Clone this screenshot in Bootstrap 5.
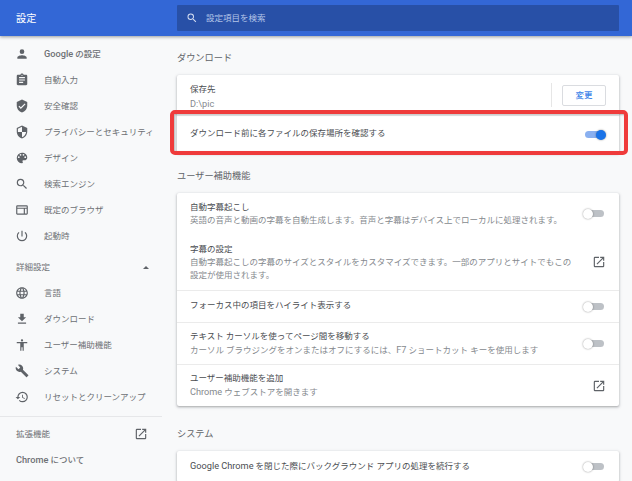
<!DOCTYPE html>
<html lang="ja"><head><meta charset="utf-8"><title>設定</title>
<link rel="stylesheet" href="https://cdn.jsdelivr.net/npm/bootstrap@5.3.0/dist/css/bootstrap.min.css">
<style>
html,body{height:481px;overflow:hidden}
body{background:#f8f9fa;font-family:"Roboto","Noto Sans CJK JP",sans-serif;font-size:8.5px;color:#5f6368;line-height:13px}
.lat{font-size:9.2px}
.hdr{height:36px;background:#3367d6;box-shadow:0 1px 3px rgba(60,64,67,.5);position:relative;z-index:2}
.hdr-title{width:177px;padding-left:16px;color:#fff;font-size:10.2px}
.srch{width:442px;height:26px;background:#2850a7;border-radius:1px;color:#b4c5e8;padding-left:9px;gap:8px}
.side{width:165px;flex:none;height:445px;padding-top:5px}
.nav-r{height:26px;padding-left:15px;color:#6d7074}
.nav-r svg{width:14px;height:14px;fill:#5f6368;flex:none;margin-right:15px}
.nav-t{font-weight:500}
.side-head{height:26px;padding:0 16px;margin-top:5px;color:#6d7074}
.side-rule{border-top:1px solid #e6e7e9;margin:6px 3px 4px 0}
.ext-ic{width:14px;height:14px;fill:#5f6368;margin-right:1px}
.main{width:442px;flex:none;margin-left:12px;padding-top:12px}
.h-sec{font-size:9.2px;color:#5f6368;height:18px;line-height:20px}
.crd{background:#fff;border-radius:2px;box-shadow:0 1px 2px rgba(60,64,67,.3),0 1px 3px 1px rgba(60,64,67,.13);margin-top:9px}
.rw{padding:0 13px;display:flex;align-items:center}
.rw+.rw{border-top:1px solid #ebebeb}
.rw-n{flex:1;min-width:0}
.up1{padding-bottom:2px}
.dn2{padding-top:3px}
.tt{color:#4a4d51}
.ss{color:#85898e}
.ss-low{margin-top:1px}
.tog{width:21px;height:10px;position:relative;flex:none;margin-right:2px}
.tog::before{content:"";position:absolute;left:2px;right:0;top:1.500px;height:7px;border-radius:4px;background:#bdc1c6}
.tog::after{content:"";position:absolute;left:0;top:0;width:10px;height:10px;border-radius:50%;background:#fff;box-shadow:0 0 2px rgba(0,0,0,.45)}
.tog-on{margin-right:0}
.tog-on::before{background:#8ab0f0;left:0;right:2px}
.tog-on::after{left:11px;background:#1a73e8}
.ln{width:14px;height:14px;fill:#5f6368;flex:none}
.chg{width:44px;height:21px;border:1px solid #dadce0;border-radius:2px;color:#4285e8;background:#fff;font-size:8.5px;padding:0;line-height:19px;font-weight:500}
.vr-s{border-left:1px solid #e6e6e6;height:24px;margin-right:10px}
.redbox{position:absolute;left:170px;top:110px;width:458px;height:45px;border:4px solid #ef3b3b;border-radius:5px;z-index:3;box-shadow:inset 1px 1px 2px rgba(60,64,67,.35)}
.r40{height:40px}.r38{height:38px}.r41{height:41px}.r56{height:56px;border:0!important}.r32{height:32px}.r42{height:42px}.r31{height:31px}
.mt13{margin-top:13px}.mt18{margin-top:18px}
</style></head><body>
<div class="hdr d-flex align-items-center">
 <div class="hdr-title">設定</div>
 <div class="srch d-flex align-items-center">
  <svg width="12" height="12" viewBox="0 0 24 24" fill="#d5def2"><path d="M15.500 14h-.79l-.28-.27A6.471 6.471 0 0 0 16 9.500 6.500 6.500 0 1 0 9.500 16c1.610 0 3.090-.59 4.230-1.570l.27.28v.79l5 4.990L20.490 19l-4.990-5zm-6 0C7.010 14 5 11.990 5 9.500S7.010 5 9.500 5 14 7.010 14 9.500 11.990 14 9.500 14z"/></svg>
  <span>設定項目を検索</span>
 </div>
</div>
<div class="d-flex">
 <div class="side">
  <div class="nav-r d-flex align-items-center"><svg viewBox="0 0 24 24"><path d="M12 12a4 4 0 1 0 0-8 4 4 0 0 0 0 8zm0 2c-2.670 0-8 1.340-8 4v2h16v-2c0-2.660-5.330-4-8-4z"/></svg><span class="nav-t"><span class="lat">Google</span> の設定</span></div>
  <div class="nav-r d-flex align-items-center"><svg viewBox="0 0 24 24"><path d="M19 3h-4.180C14.400 1.840 13.300 1 12 1s-2.400.84-2.820 2H5c-1.100 0-2 .9-2 2v14c0 1.100.9 2 2 2h14c1.100 0 2-.9 2-2V5c0-1.100-.9-2-2-2zm-7 0c.55 0 1 .45 1 1s-.45 1-1 1-1-.45-1-1 .45-1 1-1zm2 14H7v-2h7v2zm3-4H7v-2h10v2zm0-4H7V7h10v2z"/></svg><span>自動入力</span></div>
  <div class="nav-r d-flex align-items-center"><svg viewBox="0 0 24 24"><path d="M12 1 3 5v6c0 5.550 3.840 10.740 9 12 5.160-1.260 9-6.450 9-12V5l-9-4zm-2 16-4-4 1.410-1.410L10 14.170l6.590-6.590L18 9l-8 8z"/></svg><span>安全確認</span></div>
  <div class="nav-r d-flex align-items-center"><svg viewBox="0 0 24 24"><path d="M12 1 3 5v6c0 5.550 3.840 10.740 9 12 5.160-1.260 9-6.450 9-12V5l-9-4zm0 10.990h7c-.53 4.120-3.280 7.790-7 8.940V12H5V6.300l7-3.110v8.800z"/></svg><span>プライバシーとセキュリティ</span></div>
  <div class="nav-r d-flex align-items-center"><svg viewBox="0 0 24 24"><path d="M12 3a9 9 0 0 0 0 18c.83 0 1.500-.67 1.500-1.500 0-.39-.15-.74-.39-1.010-.23-.26-.38-.61-.38-.99 0-.83.67-1.500 1.500-1.500H16c2.760 0 5-2.240 5-5 0-4.420-4.030-8-9-8zm-5.500 9a1.500 1.500 0 1 1 0-3 1.500 1.500 0 0 1 0 3zm3-4a1.500 1.500 0 1 1 0-3 1.500 1.500 0 0 1 0 3zm5 0a1.500 1.500 0 1 1 0-3 1.500 1.500 0 0 1 0 3zm3 4a1.500 1.500 0 1 1 0-3 1.500 1.500 0 0 1 0 3z"/></svg><span>デザイン</span></div>
  <div class="nav-r d-flex align-items-center"><svg viewBox="0 0 24 24"><path d="M15.500 14h-.79l-.28-.27A6.471 6.471 0 0 0 16 9.500 6.500 6.500 0 1 0 9.500 16c1.610 0 3.090-.59 4.230-1.570l.27.28v.79l5 4.990L20.490 19l-4.990-5zm-6 0C7.010 14 5 11.990 5 9.500S7.010 5 9.500 5 14 7.010 14 9.500 11.990 14 9.500 14z"/></svg><span>検索エンジン</span></div>
  <div class="nav-r d-flex align-items-center"><svg viewBox="0 0 24 24"><path d="M22 6a2 2 0 0 0-2-2H4a2 2 0 0 0-2 2v12c0 1.100.9 2 2 2h16a2 2 0 0 0 2-2V6zM4 8V6h16v2H4zm0 10v-8h11v8H4zm16 0h-3v-8h3v8z"/></svg><span>既定のブラウザ</span></div>
  <div class="nav-r d-flex align-items-center"><svg viewBox="0 0 24 24"><path d="M13 3h-2v10h2V3zm4.830 2.170-1.420 1.420A6.920 6.920 0 0 1 19 12c0 3.870-3.130 7-7 7s-7-3.130-7-7c0-2.190 1.010-4.130 2.580-5.420L6.170 5.170A8.932 8.932 0 0 0 3 12a9 9 0 0 0 18 0c0-2.740-1.230-5.180-3.170-6.830z"/></svg><span>起動時</span></div>
  <div class="side-head d-flex align-items-center justify-content-between"><span>詳細設定</span><svg width="6" height="3" viewBox="0 0 10 5" fill="#5f6368"><path d="M0 5 5 0l5 5z"/></svg></div>
  <div class="nav-r d-flex align-items-center"><svg viewBox="0 0 24 24"><path d="M11.990 2C6.470 2 2 6.480 2 12s4.470 10 9.990 10C17.520 22 22 17.520 22 12S17.520 2 11.990 2zm6.930 6h-2.950a15.650 15.650 0 0 0-1.380-3.560A8.030 8.030 0 0 1 18.920 8zM12 4.040c.83 1.200 1.480 2.530 1.910 3.960h-3.820c.43-1.430 1.080-2.760 1.910-3.960zM4.260 14C4.100 13.360 4 12.690 4 12s.1-1.360.26-2h3.380c-.08.66-.14 1.320-.14 2s.06 1.340.14 2H4.260zm.82 2h2.950c.32 1.250.78 2.450 1.380 3.560A7.987 7.987 0 0 1 5.080 16zm2.950-8H5.080a7.987 7.987 0 0 1 4.330-3.560A15.650 15.650 0 0 0 8.030 8zM12 19.960c-.83-1.200-1.480-2.530-1.910-3.960h3.820c-.43 1.430-1.080 2.760-1.910 3.960zM14.340 14H9.660c-.09-.66-.16-1.320-.16-2s.07-1.350.16-2h4.680c.09.650.16 1.320.16 2s-.07 1.340-.16 2zm.25 5.560c.6-1.110 1.060-2.310 1.380-3.560h2.950a8.030 8.030 0 0 1-4.330 3.560zM16.360 14c.08-.66.14-1.320.14-2s-.06-1.340-.14-2h3.380c.16.640.26 1.310.26 2s-.1 1.360-.26 2h-3.380z"/></svg><span>言語</span></div>
  <div class="nav-r d-flex align-items-center"><svg viewBox="0 0 24 24"><path d="M19 9h-4V3H9v6H5l7 7 7-7zM5 18v2h14v-2H5z"/></svg><span>ダウンロード</span></div>
  <div class="nav-r d-flex align-items-center"><svg viewBox="0 0 24 24"><path d="M12 2a2 2 0 1 1 0 4 2 2 0 0 1 0-4zm9 7h-6v13h-2v-6h-2v6H9V9H3V7h18v2z"/></svg><span>ユーザー補助機能</span></div>
  <div class="nav-r d-flex align-items-center"><svg viewBox="0 0 24 24"><path d="m22.700 19-9.100-9.100c.9-2.300.4-5-1.500-6.900-2-2-5-2.400-6.900-1.500L9 6 6 9 1.600 4.700C.7 6.600 1.100 9.600 3.100 11.600c1.900 1.900 4.600 2.400 6.900 1.500l9.100 9.100c.4.400 1 .4 1.400 0l2.300-2.300c.4-.4.4-1 0-1.400z"/></svg><span>システム</span></div>
  <div class="nav-r d-flex align-items-center"><svg viewBox="0 0 24 24"><path d="M13 3a9 9 0 0 0-9 9H1l3.890 3.890.07.14L9 12H6c0-3.870 3.130-7 7-7s7 3.130 7 7-3.130 7-7 7c-1.930 0-3.680-.79-4.940-2.060l-1.420 1.420A8.954 8.954 0 0 0 13 21a9 9 0 0 0 0-18zm-1 5v5l4.280 2.540.72-1.210-3.500-2.080V8H12z"/></svg><span>リセットとクリーンアップ</span></div>
  <div class="side-rule"></div>
  <div class="side-head d-flex align-items-center justify-content-between m-0"><span>拡張機能</span><svg class="ext-ic" viewBox="0 0 24 24"><path d="M19 19H5V5h7V3H5a2 2 0 0 0-2 2v14a2 2 0 0 0 2 2h14a2 2 0 0 0 2-2v-7h-2v7zM14 3v2h3.590l-9.830 9.830 1.410 1.410L19 6.410V10h2V3h-7z"/></svg></div>
  <div class="side-head d-flex align-items-center m-0"><span class="nav-t"><span class="lat">Chrome</span> について</span></div>
 </div>
 <div class="main">
  <div class="h-sec">ダウンロード</div>
  <div class="crd">
   <div class="rw r40"><div class="rw-n dn2"><div class="tt">保存先</div><div class="ss ss-low"><span class="lat">D:\pic</span></div></div><div class="vr-s"></div><button class="btn chg">変更</button></div>
   <div class="rw r38"><div class="rw-n tt up1">ダウンロード前に各ファイルの保存場所を確認する</div><div class="tog tog-on"></div></div>
  </div>
  <div class="h-sec mt13">ユーザー補助機能</div>
  <div class="crd">
   <div class="rw r41"><div class="rw-n"><div class="tt">自動字幕起こし</div><div class="ss">英語の音声と動画の字幕を自動生成します。音声と字幕はデバイス上でローカルに処理されます。</div></div><div class="tog"></div></div>
   <div class="rw r56"><div class="rw-n"><div class="tt">字幕の設定</div><div class="ss">自動字幕起こしの字幕のサイズとスタイルをカスタマイズできます。一部のアプリとサイトでもこの<br>設定が使用されます。</div></div><svg class="ln" viewBox="0 0 24 24"><path d="M19 19H5V5h7V3H5a2 2 0 0 0-2 2v14a2 2 0 0 0 2 2h14a2 2 0 0 0 2-2v-7h-2v7zM14 3v2h3.590l-9.830 9.830 1.410 1.410L19 6.410V10h2V3h-7z"/></svg></div>
   <div class="rw r32"><div class="rw-n tt up1">フォーカス中の項目をハイライト表示する</div><div class="tog"></div></div>
   <div class="rw r42"><div class="rw-n"><div class="tt">テキスト カーソルを使ってページ間を移動する</div><div class="ss">カーソル ブラウジングをオンまたはオフにするには、<span class="lat">F7</span> ショートカット キーを使用します</div></div><div class="tog"></div></div>
   <div class="rw r42"><div class="rw-n"><div class="tt">ユーザー補助機能を追加</div><div class="ss"><span class="lat">Chrome</span> ウェブストアを開きます</div></div><svg class="ln" viewBox="0 0 24 24"><path d="M19 19H5V5h7V3H5a2 2 0 0 0-2 2v14a2 2 0 0 0 2 2h14a2 2 0 0 0 2-2v-7h-2v7zM14 3v2h3.590l-9.830 9.830 1.410 1.410L19 6.410V10h2V3h-7z"/></svg></div>
  </div>
  <div class="h-sec mt18">システム</div>
  <div class="crd">
   <div class="rw r31"><div class="rw-n tt up1"><span class="lat">Google Chrome</span> を閉じた際にバックグラウンド アプリの処理を続行する</div><div class="tog"></div></div>
  </div>
 </div>
</div>
<div class="redbox"></div>
</body></html>
